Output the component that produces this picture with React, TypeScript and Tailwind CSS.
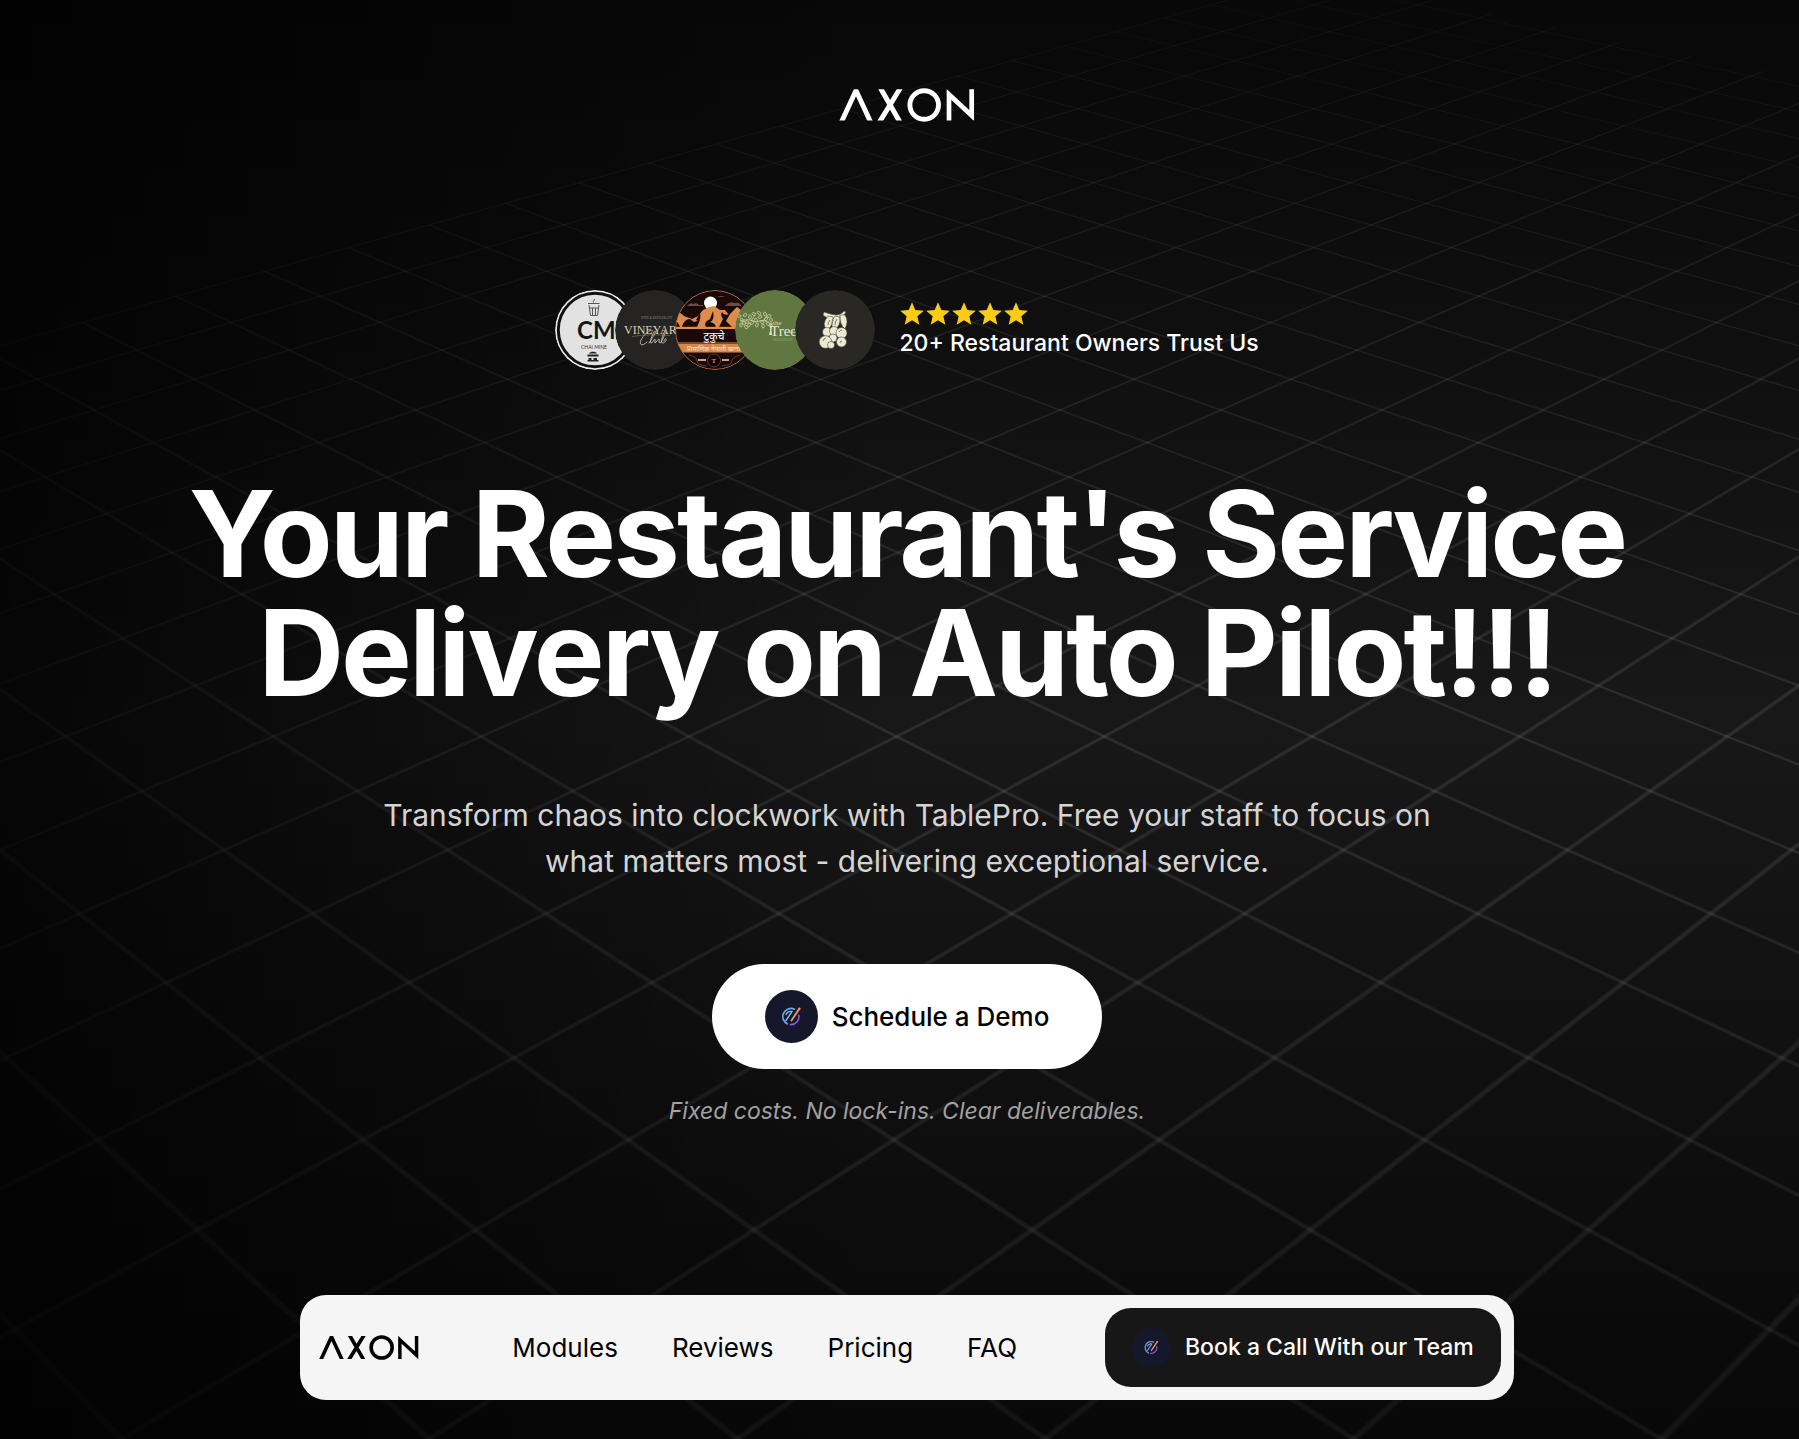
import React from "react";

/* Perspective floor: integer lattice (a, b) projected towards a horizon above the page. */
function project(a: number, b: number): [number, number] {
  const n = a + b;
  const m = a - b;
  const w = 1 / (6.88e-4 - n * 2.491e-5);
  return [907 + w * (0.07145 * m - 0.0072), w - 717];
}

const A_START = -11;
const B_START = -19.3;
const DEPTH = 12;

function strip(p: [number, number][]) {
  return "M" + p.map(([x, y]) => `${x.toFixed(2)} ${y.toFixed(2)}`).join("L") + "Z";
}

function gridPath(half: number) {
  const out: string[] = [];
  for (let a = A_START; a <= 12; a++) {
    out.push(
      strip([
        project(a - half, B_START),
        project(a + half, B_START),
        project(a + half, DEPTH - a),
        project(a - half, DEPTH - a),
      ]),
    );
  }
  for (let b = -19; b <= 12; b++) {
    out.push(
      strip([
        project(A_START, b - half),
        project(A_START, b + half),
        project(DEPTH - b, b + half),
        project(DEPTH - b, b - half),
      ]),
    );
  }
  return out;
}

/* A wide faint strip under a narrow one gives each line a soft edge. */
const LINES = [...gridPath(0.019), ...gridPath(0.011)];

function Backdrop() {
  return (
    <div aria-hidden="true" className="absolute inset-0 -z-10 overflow-hidden bg-linear-to-b from-[#080808] via-[#181818] to-[#080808]">
      <svg className="h-full w-full" viewBox="0 0 1799 1439" preserveAspectRatio="xMidYMin slice">
        <defs>
          <linearGradient id="fade" x1="0" y1="0" x2="0" y2="1">
            <stop offset="0" stopColor="#fff" stopOpacity="0.4" />
            <stop offset="0.2" stopColor="#fff" stopOpacity="0.75" />
            <stop offset="0.5" stopColor="#fff" stopOpacity="1" />
            <stop offset="1" stopColor="#fff" stopOpacity="0.5" />
          </linearGradient>
          <mask id="depth">
            <rect width="1799" height="1439" fill="url(#fade)" />
          </mask>
        </defs>
        <g mask="url(#depth)" fill="#fff" fillOpacity="0.052">
          {LINES.map((d, i) => (
            <path key={i} d={d} />
          ))}
        </g>
      </svg>
      <div className="absolute inset-0 bg-linear-to-r from-black/75 to-transparent to-50%" />
    </div>
  );
}

function AxonLogo({ className }: { className: string }) {
  return (
    <svg className={className} viewBox="0 0 136 34" fill="none" stroke="currentColor" role="img" aria-label="AXON">
      <clipPath id="caps">
        <rect y="1.200" width="136" height="31.300" />
      </clipPath>
      <g clipPath="url(#caps)">
        <path d="M2.200 34.500 17 2.500 31.800 34.500" strokeWidth="4.900" />
        <path d="M40.200 34.500 61.400 0M41.400 0 61.200 34.500" strokeWidth="5" />
        <path d="M110 34V6.500L132.700 27.500V0" strokeWidth="4.700" strokeMiterlimit="8" />
      </g>
      <circle cx="85.200" cy="17" r="14.300" strokeWidth="4.900" />
    </svg>
  );
}

function Badge({ className }: { className: string }) {
  return (
    <span className={className + " flex shrink-0 items-center justify-center rounded-full bg-[#15172b]"}>
      <svg className="h-full w-full" viewBox="0 0 53 53" fill="none" strokeLinecap="round">
        <path d="M29.500 19.200A8 8 0 1 0 22.500 34" stroke="#6fa8e8" strokeWidth="1.600" />
        <path d="M25.500 34.600a8 8 0 0 0 8.300-9.400" stroke="#8a5be0" strokeWidth="1.600" />
        <path d="M21 30.500 27 21.500M21 24.500c1-2.500 3.500-3.500 6-3" stroke="#7cc0f0" strokeWidth="1.400" />
        <path d="M26.500 30.500 34.200 18.900" stroke="#f0925e" strokeWidth="1.900" />
        <circle cx="34.400" cy="18.800" r="1.200" fill="#f0925e" />
      </svg>
    </span>
  );
}

function ChaiMine() {
  return (
    <svg viewBox="0 0 80 80" className="h-full w-full">
      <circle cx="40" cy="40" r="40" fill="#ececec" />
      <circle cx="40" cy="40" r="36.700" fill="#e2e2e2" stroke="#111" strokeWidth="3" />
      <g fill="none" stroke="#555" strokeWidth="1">
        <path d="M33 13.500h11.500M34 15l1.500 10.500h7L44 15M34.300 18h9.400M37.500 18v7M40.500 18v7M38.500 12.500c-1-2 1.500-1.500.8-3.500" />
      </g>
      <text x="22" y="49" fontSize="24" fontWeight="700" fill="#151515" fontFamily="Lato, sans-serif">CM</text>
      <text x="26" y="59" fontSize="5" fill="#333" fontFamily="Lato, sans-serif">CHAI MINE</text>
      <path d="M34 63.500c1-2.500 7-2.500 8 0zM32.500 64.500h11v2h-11zM33.500 68h3v3h-3zM38.500 68h3.500v3h-3.500zM32.500 70h11v1.500h-11z" fill="#222" />
    </svg>
  );
}

function Vineyard() {
  return (
    <svg viewBox="0 0 80 80" className="h-full w-full">
      <circle cx="40" cy="40" r="40" fill="#262422" />
      <text x="26" y="29" fontSize="3" fill="#8d8879" fontFamily="Liberation Serif, serif">WINE &amp; RESTAURANT</text>
      <text x="9" y="43.500" fontSize="12" fill="#d8d3b4" fontFamily="Liberation Serif, serif">VINEYARD</text>
      <path d="M17 46.500c12-2 25-2 38-1" stroke="#8d8879" strokeWidth=".5" fill="none" />
      <g fill="none" stroke="#c9c4a8" strokeWidth=".9" strokeLinecap="round">
        <path d="M38 41c-2-3-9 3-12 9-2 5 1 7 6 2M34 53c3-4 8-12 6-12-2 1-6 12-4 12s3-4 4-4c1 0-1 4 0 4s3-4 4-4-1 4 1 4c3-2 6-12 5-12s-5 12-3 12 5-2 4-4c-1-1-2 1-2 2" />
      </g>
    </svg>
  );
}

function Tukuche() {
  return (
    <svg viewBox="0 0 80 80" className="h-full w-full">
      <defs>
        <clipPath id="tk">
          <circle cx="40" cy="40" r="39.500" />
        </clipPath>
      </defs>
      <g clipPath="url(#tk)">
        <rect width="80" height="80" fill="#1b0809" />
        <path d="M13 15q3-3 5-1 4-2 6 1h4v1H12zM52 14q4-3 7-1 5-1 7 2v1H50zM42 7q4-2 8 0z" fill="#6b4c4a" />
        <circle cx="35.500" cy="13" r="6.500" fill="#fff" />
        <path d="M0 26 4 22l5 4 8 3 6-3 5-6 6-3 5-1 6 4 5 0 4 5 8-8 8 6 12 8v8H0z" fill="#dc8d4d" />
        <path d="M7 37q2-8 8-8l4 3 6-2-3 7zM31 37q-3-5 4-8l3-8q2 9-3 11 5 1 6 5zM44 37l4-8q-3-4-1-7 2 4 8 2l-4 7 6 6zM0 37v-7q3 2 5 7zM21 30l4-7q1 5-1 8z" fill="#1b0809" />
        <path d="M0 37.300h80M0 53h80" stroke="#dc8d4d" strokeWidth="1" />
        <text x="39" y="49.500" fontSize="11" textAnchor="middle" fill="#fff" fontFamily="Noto Sans, Noto Sans Devanagari, sans-serif">टुकुचे</text>
        <rect y="54" width="80" height="8.500" fill="#d68748" />
        <text x="12" y="60.500" fontSize="6.500" fill="#fbe3c8" fontFamily="Noto Sans, Noto Sans Devanagari, sans-serif">प्रामाणिक नेपाली खाना</text>
        <circle cx="39" cy="70.500" r="6.500" fill="#120506" stroke="#6d4a3c" strokeWidth=".8" />
        <text x="39" y="73" fontSize="7" textAnchor="middle" fill="#e9d8d0" fontFamily="Liberation Serif, serif">T</text>
        <path d="M23 70h8M47 70h7" stroke="#b9a29b" strokeWidth="1.800" />
        <path d="M14 65q8 2 8 6t10 5M65 65q-8 2-8 6t-10 5" stroke="#6d4a3c" strokeWidth=".8" fill="none" />
      </g>
      <circle cx="40" cy="40" r="39.500" fill="none" stroke="#b9713d" strokeWidth="1" />
    </svg>
  );
}

const LEAVES: [number, number][] = [
  [4, 26], [7, 30], [6, 35], [10, 25], [12, 32], [11, 37], [15, 27], [17, 33], [19, 24], [21, 30],
  [22, 35], [25, 27], [27, 32], [30, 24], [31, 29], [34, 26], [33, 34], [36, 30], [14, 35], [9, 33],
  [24, 23], [28, 36], [36, 35],
];

function TheTree() {
  return (
    <svg viewBox="0 0 80 80" className="h-full w-full">
      <circle cx="40" cy="40" r="40" fill="#607742" />
      <g fill="none" stroke="#cfd2a0" strokeWidth=".8">
        {LEAVES.map(([x, y], i) => (
          <ellipse key={i} cx={x} cy={y} rx="2" ry="1.300" transform={`rotate(${i * 47} ${x} ${y})`} />
        ))}
        <path d="M5 31q8-3 16 1 9-4 16 3M16 31l4-6M28 31l4-5" />
      </g>
      <path d="M35 35q1 5-1 10h3q-1-5 0-9z" fill="#dfe0c0" />
      <text x="38" y="35" fontSize="7" fill="#d9dbb8" fontFamily="Liberation Serif, serif">the</text>
      <text x="35" y="45.500" fontSize="15" fill="#e6e7cf" fontFamily="Liberation Serif, serif">Tree</text>
      <text x="38" y="50.500" fontSize="3" fill="#9aa77a" fontFamily="Liberation Serif, serif">RESTAURANT</text>
    </svg>
  );
}

function Berries() {
  return (
    <svg viewBox="0 0 80 80" className="h-full w-full">
      <circle cx="40" cy="40" r="40" fill="#292825" />
      <g fill="#ecead3" stroke="#4a483f" strokeWidth=".6">
        <path d="M29 22q8 3 13 3 5-1 7-4l2 1q-2 5-8 6l-6 1q-6-1-9-4z" />
        <path d="M33 26q-7 8-1 14 7-5 6-13zM40 26q-6 7-1 14 7-4 6-13zM45 25q-1 9 5 14 4-8 0-14z" />
        <circle cx="32" cy="42" r="4.500" />
        <circle cx="39" cy="41" r="4.500" />
        <circle cx="46.500" cy="43" r="5.500" />
        <circle cx="38" cy="48" r="4" />
        <circle cx="30.500" cy="52" r="6.300" />
        <circle cx="46.500" cy="52" r="5" />
        <circle cx="36" cy="55" r="3.500" />
      </g>
      <path d="M28 51q1-3 3-3M44 42q1-2 3-2M45 53q0-2 2-2M35 30q-2 3-2 5M42 29q-2 3-2 6" stroke="#4a483f" strokeWidth=".7" fill="none" />
    </svg>
  );
}

const CLIENTS = [ChaiMine, Vineyard, Tukuche, TheTree, Berries];

function Star() {
  return (
    <svg className="size-[26px]" viewBox="1 1 22 22" fill="#facc15">
      <path d="M12 17.270 18.180 21l-1.640-7.030L22 9.240l-7.190-.61L12 2 9.190 8.630 2 9.240l5.460 4.730L5.820 21z" />
    </svg>
  );
}

const LINKS = ["Modules", "Reviews", "Pricing", "FAQ"];

export default function App() {
  return (
    <div className="relative isolate flex min-h-screen flex-col items-center overflow-hidden bg-black pl-[15px] font-[Inter,sans-serif] text-white">
      <Backdrop />
      <header className="pt-[88px]">
        <AxonLogo className="h-[34px] w-[136px]" />
      </header>

      <main className="flex flex-col items-center">
        <section className="mt-[168px] flex items-center gap-6">
          <div className="flex">
            {CLIENTS.map((Client, i) => (
              <div key={i} className="-mr-5 size-20 overflow-hidden rounded-full last:mr-0">
                <Client />
              </div>
            ))}
          </div>
          <div>
            <div className="flex" role="img" aria-label="Five stars">
              {[0, 1, 2, 3, 4].map((i) => (
                <Star key={i} />
              ))}
            </div>
            <p className="text-[23px] leading-8 font-medium">20+ Restaurant Owners Trust Us</p>
          </div>
        </section>

        <h1 className="mt-[105px] text-center text-[119px] leading-[119px] font-bold tracking-tight">
          Your Restaurant's Service
          <br />
          Delivery on Auto Pilot!!!
        </h1>

        <p className="mt-[79px] text-center text-[30px] leading-[46px] text-neutral-300">
          Transform chaos into clockwork with TablePro. Free your staff to focus on
          <br />
          what matters most - delivering exceptional service.
        </p>

        <button className="mt-[80px] flex h-[105px] items-center gap-[14px] rounded-full bg-white px-[53px] text-[26px] font-medium text-black">
          <Badge className="size-[53px]" />
          Schedule a Demo
        </button>
        <p className="mt-[26px] text-[23px] leading-8 text-neutral-400 italic">Fixed costs. No lock-ins. Clear deliverables.</p>
      </main>

      <nav className="mt-auto mb-[39px] flex h-[105px] items-center rounded-[26px] bg-[#f5f5f5] pr-[13px] pl-[19px] text-black">
        <AxonLogo className="h-[25px] w-[100px]" />
        <div className="ml-[93px] flex gap-[54px] text-[26px]">
          {LINKS.map((label) => (
            <a key={label} href={"#" + label.toLowerCase()}>
              {label}
            </a>
          ))}
        </div>
        <button className="ml-[88px] flex h-[79px] items-center gap-[14px] rounded-[26px] bg-[#171717] px-[27px] text-[23px] font-medium text-white">
          <Badge className="size-[39px]" />
          Book a Call With our Team
        </button>
      </nav>
    </div>
  );
}
